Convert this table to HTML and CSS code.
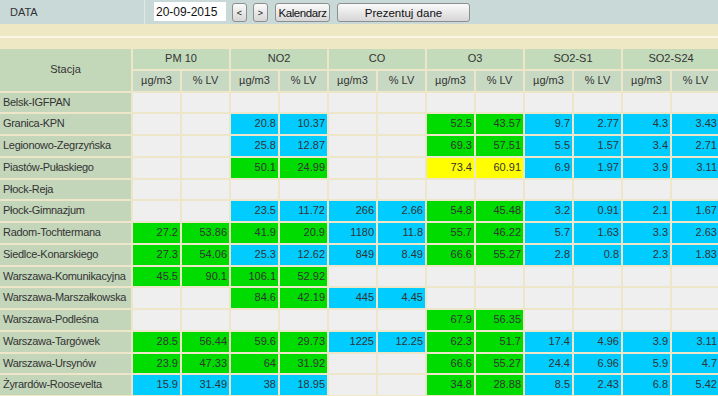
FILE: index.html
```html
<!DOCTYPE html>
<html lang="pl">
<head>
<meta charset="utf-8">
<title>Dane</title>
<link rel="stylesheet" href="styles.css">
</head>
<body>
<div class="topbar">
  <div class="label">DATA</div>
  <div class="controls">
    <input class="date" type="text" value="20-09-2015">
    <button class="btn small">&lt;</button>
    <button class="btn small">&gt;</button>
    <button class="btn cal">Kalendarz</button>
    <button class="btn show">Prezentuj dane</button>
  </div>
</div>
<div class="band"></div>
<div class="band-line"></div>
<div class="band band2"></div>
<div class="grid">
  <div class="hd stacja">Stacja</div>
  <div class="hd grp">PM 10</div>
  <div class="hd grp">NO2</div>
  <div class="hd grp">CO</div>
  <div class="hd grp">O3</div>
  <div class="hd grp">SO2-S1</div>
  <div class="hd grp">SO2-S24</div>
  <div class="sub">µg/m3</div><div class="sub">% LV</div>
  <div class="sub">µg/m3</div><div class="sub">% LV</div>
  <div class="sub">µg/m3</div><div class="sub">% LV</div>
  <div class="sub">µg/m3</div><div class="sub">% LV</div>
  <div class="sub">µg/m3</div><div class="sub">% LV</div>
  <div class="sub">µg/m3</div><div class="sub">% LV</div>

  <div class="st">Belsk-IGFPAN</div>
  <div class="e"></div><div class="e"></div><div class="e"></div><div class="e"></div><div class="e"></div><div class="e"></div>
  <div class="e"></div><div class="e"></div><div class="e"></div><div class="e"></div><div class="e"></div><div class="e"></div>

  <div class="st">Granica-KPN</div>
  <div class="e"></div><div class="e"></div><div class="b">20.8</div><div class="b">10.37</div><div class="e"></div><div class="e"></div>
  <div class="g">52.5</div><div class="g">43.57</div><div class="b">9.7</div><div class="b">2.77</div><div class="b">4.3</div><div class="b">3.43</div>

  <div class="st">Legionowo-Zegrzyńska</div>
  <div class="e"></div><div class="e"></div><div class="b">25.8</div><div class="b">12.87</div><div class="e"></div><div class="e"></div>
  <div class="g">69.3</div><div class="g">57.51</div><div class="b">5.5</div><div class="b">1.57</div><div class="b">3.4</div><div class="b">2.71</div>

  <div class="st">Piastów-Pułaskiego</div>
  <div class="e"></div><div class="e"></div><div class="g">50.1</div><div class="g">24.99</div><div class="e"></div><div class="e"></div>
  <div class="y">73.4</div><div class="y">60.91</div><div class="b">6.9</div><div class="b">1.97</div><div class="b">3.9</div><div class="b">3.11</div>

  <div class="st">Płock-Reja</div>
  <div class="e"></div><div class="e"></div><div class="e"></div><div class="e"></div><div class="e"></div><div class="e"></div>
  <div class="e"></div><div class="e"></div><div class="e"></div><div class="e"></div><div class="e"></div><div class="e"></div>

  <div class="st">Płock-Gimnazjum</div>
  <div class="e"></div><div class="e"></div><div class="b">23.5</div><div class="b">11.72</div><div class="b">266</div><div class="b">2.66</div>
  <div class="g">54.8</div><div class="g">45.48</div><div class="b">3.2</div><div class="b">0.91</div><div class="b">2.1</div><div class="b">1.67</div>

  <div class="st">Radom-Tochtermana</div>
  <div class="g">27.2</div><div class="g">53.86</div><div class="g">41.9</div><div class="g">20.9</div><div class="b">1180</div><div class="b">11.8</div>
  <div class="g">55.7</div><div class="g">46.22</div><div class="b">5.7</div><div class="b">1.63</div><div class="b">3.3</div><div class="b">2.63</div>

  <div class="st">Siedlce-Konarskiego</div>
  <div class="g">27.3</div><div class="g">54.06</div><div class="b">25.3</div><div class="b">12.62</div><div class="b">849</div><div class="b">8.49</div>
  <div class="g">66.6</div><div class="g">55.27</div><div class="b">2.8</div><div class="b">0.8</div><div class="b">2.3</div><div class="b">1.83</div>

  <div class="st">Warszawa-Komunikacyjna</div>
  <div class="g">45.5</div><div class="g">90.1</div><div class="g">106.1</div><div class="g">52.92</div><div class="e"></div><div class="e"></div>
  <div class="e"></div><div class="e"></div><div class="e"></div><div class="e"></div><div class="e"></div><div class="e"></div>

  <div class="st">Warszawa-Marszałkowska</div>
  <div class="e"></div><div class="e"></div><div class="g">84.6</div><div class="g">42.19</div><div class="b">445</div><div class="b">4.45</div>
  <div class="e"></div><div class="e"></div><div class="e"></div><div class="e"></div><div class="e"></div><div class="e"></div>

  <div class="st">Warszawa-Podleśna</div>
  <div class="e"></div><div class="e"></div><div class="e"></div><div class="e"></div><div class="e"></div><div class="e"></div>
  <div class="g">67.9</div><div class="g">56.35</div><div class="e"></div><div class="e"></div><div class="e"></div><div class="e"></div>

  <div class="st">Warszawa-Targówek</div>
  <div class="g">28.5</div><div class="g">56.44</div><div class="g">59.6</div><div class="g">29.73</div><div class="b">1225</div><div class="b">12.25</div>
  <div class="g">62.3</div><div class="g">51.7</div><div class="b">17.4</div><div class="b">4.96</div><div class="b">3.9</div><div class="b">3.11</div>

  <div class="st">Warszawa-Ursynów</div>
  <div class="g">23.9</div><div class="g">47.33</div><div class="g">64</div><div class="g">31.92</div><div class="e"></div><div class="e"></div>
  <div class="g">66.6</div><div class="g">55.27</div><div class="b">24.4</div><div class="b">6.96</div><div class="b">5.9</div><div class="b">4.7</div>

  <div class="st">Żyrardów-Roosevelta</div>
  <div class="b">15.9</div><div class="b">31.49</div><div class="b">38</div><div class="b">18.95</div><div class="e"></div><div class="e"></div>
  <div class="g">34.8</div><div class="g">28.88</div><div class="b">8.5</div><div class="b">2.43</div><div class="b">6.8</div><div class="b">5.42</div>
</div>
</body>
</html>
```

FILE: styles.css
```css
html, body {
  margin: 0;
  padding: 0;
  overflow: hidden;
  background: #efe8c6;
  font-family: "Liberation Sans", Arial, sans-serif;
  font-size: 11px;
  color: #333;
}

.topbar {
  display: flex;
  height: 24px;
  background: #c9d9d7;
}

.label {
  width: 145px;
  box-sizing: border-box;
  padding-left: 10px;
  line-height: 24px;
  border-right: 1px solid #dfe8e3;
  color: #333;
}

.controls {
  display: flex;
  align-items: flex-start;
  padding-left: 9px;
}

.date {
  margin: 2px 6px 0 0;
  width: 72px;
  height: 19px;
  box-sizing: border-box;
  border: none;
  padding: 0 0 0 2px;
  background: #fff;
  font: 12px "Liberation Sans", Arial, sans-serif;
  color: #111;
  outline: none;
}

.btn {
  margin: 3px 6px 0 0;
  height: 19px;
  box-sizing: border-box;
  padding: 0;
  border: 1px solid #8d8f8f;
  border-radius: 3px;
  background: linear-gradient(#fafafa, #e6e6e6 55%, #d6d6d6);
  font: 11px "Liberation Sans", Arial, sans-serif;
  color: #111;
  white-space: nowrap;
}

.btn.small { width: 15px; font-size: 9px; }
.btn.cal { width: 55px; margin-left: 1px; font-size: 11.5px; letter-spacing: -0.4px; }
.btn.show { width: 133px; margin-left: 1px; font-size: 11.5px; }

.band {
  height: 12px;
  background: #efe8c5;
}

.band-line {
  height: 2px;
  background: #faf7e8;
}

.band2 {
  height: 11px;
}

.grid {
  display: grid;
  grid-template-columns: 131px repeat(12, 47px);
  grid-auto-rows: 19.75px;
  gap: 2px;
  width: max-content;
  background: #eee6c9;
}

.grid > div {
  line-height: 19.75px;
  white-space: nowrap;
  overflow: hidden;
}

.hd {
  background: #c4dbbb;
  text-align: center;
}

.stacja {
  grid-row: span 2;
  line-height: 40px !important;
  background: #c3d8b9;
}

.grp {
  grid-column: span 2;
}

.sub {
  background: #c8d9c3;
  text-align: center;
}

.st {
  background: #c3d6ba;
  padding-left: 3px;
  letter-spacing: -0.3px;
}

.e, .g, .b, .y {
  text-align: right;
  padding-right: 2px;
}

.e { background: #efefef; }
.g { background: #00dc00; }
.b { background: #00ccff; }
.y { background: #ffff00; }
```
